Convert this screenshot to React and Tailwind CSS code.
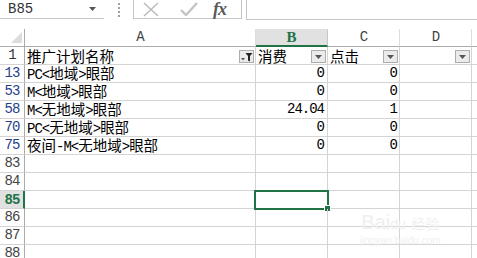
import React from "react";

const CJK = "font-['Noto_Sans_CJK_SC',sans-serif]";
const LAT = "font-['Liberation_Mono','Noto_Sans_CJK_SC',monospace] text-[14px] tracking-[-1px]";

function Txt({ s, className = "" }) {
  const parts = s.split(/([\x00-\x7F]+)/).filter((p) => p.length);
  return (
    <span className={`${CJK} text-[14.5px] leading-[16px] whitespace-nowrap ${className}`}>
      {parts.map((p, i) =>
        /^[\x00-\x7F]+$/.test(p) ? (
          <span key={i} className={LAT}>
            {p}
          </span>
        ) : (
          <span key={i}>{p}</span>
        )
      )}
    </span>
  );
}

function Arrow() {
  return (
    <svg width="7" height="4" viewBox="0 0 7 4">
      <polygon points="0,0 7,0 3.5,4" fill="#555" />
    </svg>
  );
}

function FilterBtn({ funnel }) {
  return (
    <div className="w-[15px] h-[13px] mb-[1px] mr-[1px] border border-[#acacac] bg-[#ebebeb] flex items-center justify-center shrink-0">
      {funnel ? (
        <svg width="13" height="10" viewBox="0 0 13 10">
          <polygon points="1,6 5,6 3,8.5" fill="#555" />
          <polygon points="5.5,1 12.5,1 10,4 10,9.5 8,8.5 8,4" fill="#222" />
        </svg>
      ) : (
        <Arrow />
      )}
    </div>
  );
}

const rows = [
  { n: "13", a: "PC<地域>眼部", b: "0", c: "0", blue: true },
  { n: "53", a: "M<地域>眼部", b: "0", c: "0", blue: true },
  { n: "58", a: "M<无地域>眼部", b: "24.04", c: "1", blue: true },
  { n: "70", a: "PC<无地域>眼部", b: "0", c: "0", blue: true },
  { n: "75", a: "夜间-M<无地域>眼部", b: "0", c: "0", blue: true },
  { n: "83" },
  { n: "84" },
  { n: "85", sel: true },
  { n: "86" },
  { n: "87" },
  { n: "88" },
];

const cell = "h-[18px] border-r border-b border-[#d4d4d4] shrink-0 flex items-center";

export default function App() {
  return (
    <div className="w-[477px] h-[258px] overflow-hidden bg-white relative text-black">
      {/* formula bar */}
      <div className="flex h-[20px]">
        <div className="w-[104px] h-[19px] border-b border-[#c6c6c6] flex items-center justify-between pl-[8px] pr-[8px]">
          <span className="font-['Liberation_Mono',monospace] text-[14px] text-[#333] leading-none">B85</span>
          <Arrow />
        </div>
        <div className="w-[29px] flex flex-col items-center pt-[3px] gap-[2px]">
          <div className="w-[2px] h-[2px] bg-[#a0a0a0]" />
          <div className="w-[2px] h-[2px] bg-[#a0a0a0]" />
          <div className="w-[2px] h-[2px] bg-[#a0a0a0]" />
          <div className="w-[2px] h-[2px] bg-[#a0a0a0]" />
        </div>
        <div className="w-[109px] h-[19px] border-l border-r border-b border-[#c6c6c6] flex items-center">
          <svg width="16" height="15" viewBox="0 0 16 15" className="ml-[9px]">
            <path d="M1,1 L15,14 M15,1 L1,14" stroke="#bdbdbd" strokeWidth="1.6" />
          </svg>
          <svg width="18" height="14" viewBox="0 0 18 14" className="ml-[21px]">
            <path d="M1,8 L6,13 L17,1" stroke="#c4c4c4" strokeWidth="2.4" fill="none" />
          </svg>
          <span className="ml-[15px] font-['Liberation_Serif',serif] italic font-bold text-[18px] leading-[18px] text-[#595959] tracking-[-1px]">
            fx
          </span>
        </div>
        <div className="w-[4px]" />
        <div className="flex-1 h-[20px] border-l border-b border-[#c6c6c6]" />
      </div>
      <div className="h-[9px]" />

      {/* column header */}
      <div className="flex h-[18px]">
        <div className="w-[25px] h-[18px] border-r border-b border-[#ababab] shrink-0 flex items-end justify-end pr-[2px] pb-[3px]">
          <svg width="11" height="11" viewBox="0 0 11 11">
            <polygon points="11,0 11,11 0,11" fill="#dcdcdc" />
          </svg>
        </div>
        <div className="w-[231px] h-[18px] border-r border-b border-r-[#dcdcdc] border-b-[#ababab] shrink-0 flex items-center justify-center">
          <span className={`${LAT} text-[#444]`}>A</span>
        </div>
        <div className="w-[72px] h-[18px] bg-[#e1e1e1] border-r border-r-[#c8c8c8] border-b-2 border-b-[#217346] shrink-0 flex items-center justify-center">
          <span className="font-['Liberation_Serif',serif] font-bold text-[15px] leading-none text-[#217346]">B</span>
        </div>
        <div className="w-[72px] h-[18px] border-r border-b border-r-[#dcdcdc] border-b-[#ababab] shrink-0 flex items-center justify-center">
          <span className={`${LAT} text-[#444]`}>C</span>
        </div>
        <div className="w-[72px] h-[18px] border-r border-b border-r-[#dcdcdc] border-b-[#ababab] shrink-0 flex items-center justify-center">
          <span className={`${LAT} text-[#444]`}>D</span>
        </div>
        <div className="flex-1 h-[18px] border-b border-[#ababab]" />
      </div>

      {/* row 1 */}
      <div className="flex">
        <div className="w-[25px] h-[18px] border-r border-r-[#ababab] border-b border-b-[#d4d4d4] shrink-0 flex items-center justify-center">
          <span className={`${LAT} text-[#333]`}>1</span>
        </div>
        <div className={`${cell} w-[231px] justify-between items-end`}>
          <div className="h-full flex items-center pl-[2px]">
            <Txt s="推广计划名称" />
          </div>
          <FilterBtn funnel />
        </div>
        <div className={`${cell} w-[72px] justify-between items-end`}>
          <div className="h-full flex items-center pl-[2px]">
            <Txt s="消费" />
          </div>
          <FilterBtn />
        </div>
        <div className={`${cell} w-[72px] justify-between items-end`}>
          <div className="h-full flex items-center pl-[2px]">
            <Txt s="点击" />
          </div>
          <FilterBtn />
        </div>
        <div className={`${cell} w-[72px] justify-end items-end`}>
          <FilterBtn />
        </div>
        <div className="flex-1 h-[18px] border-b border-[#d4d4d4]" />
      </div>

      {rows.map((r) => (
        <div key={r.n} className="flex">
          <div
            className={`w-[25px] h-[18px] border-b border-b-[#d4d4d4] shrink-0 flex items-center justify-center ${
              r.sel ? "bg-[#e1e1e1] border-r-2 border-r-[#217346]" : "border-r border-r-[#ababab]"
            }`}
          >
            {r.sel ? (
              <span className="font-['Liberation_Mono',monospace] font-bold text-[14px] tracking-[-1px] leading-none text-[#217346] ml-[1px]">
                {r.n}
              </span>
            ) : (
              <span className={`${LAT} ${r.blue ? "text-[#26408c]" : "text-[#444]"}`}>{r.n}</span>
            )}
          </div>
          <div className={`${cell} w-[231px] pl-[2px]`}>{r.a && <Txt s={r.a} />}</div>
          <div className={`${cell} w-[72px] justify-end pr-[3px] relative`}>
            {r.b && <span className={LAT}>{r.b}</span>}
            {r.sel && (
              <>
                <div className="absolute left-[-2px] top-[-1px] w-[75px] h-[20px] border-2 border-[#217346]" />
                <div className="absolute right-[-4px] bottom-[-4px] w-[7px] h-[7px] bg-[#217346] border border-white" />
              </>
            )}
          </div>
          <div className={`${cell} w-[72px] justify-end pr-[2px]`}>
            {r.c && <span className={LAT}>{r.c}</span>}
          </div>
          <div className={`${cell} w-[72px]`} />
          <div className="flex-1 h-[18px] border-b border-[#d4d4d4]" />
        </div>
      ))}

      {/* watermark */}
      <div className="absolute left-[360px] top-[212px] pointer-events-none flex flex-col items-center">
        <span className="font-['Liberation_Sans',sans-serif] text-[20px] leading-none text-[#efefef]">
          Bai<span className="text-[14px]">du</span> <span className="font-['Noto_Sans_CJK_SC',sans-serif] text-[14px]">经验</span>
        </span>
        <span className="font-['Liberation_Sans',sans-serif] text-[10px] leading-none text-[#f0f0f0] mt-[4px]">jingyan.baidu.com</span>
      </div>
    </div>
  );
}
